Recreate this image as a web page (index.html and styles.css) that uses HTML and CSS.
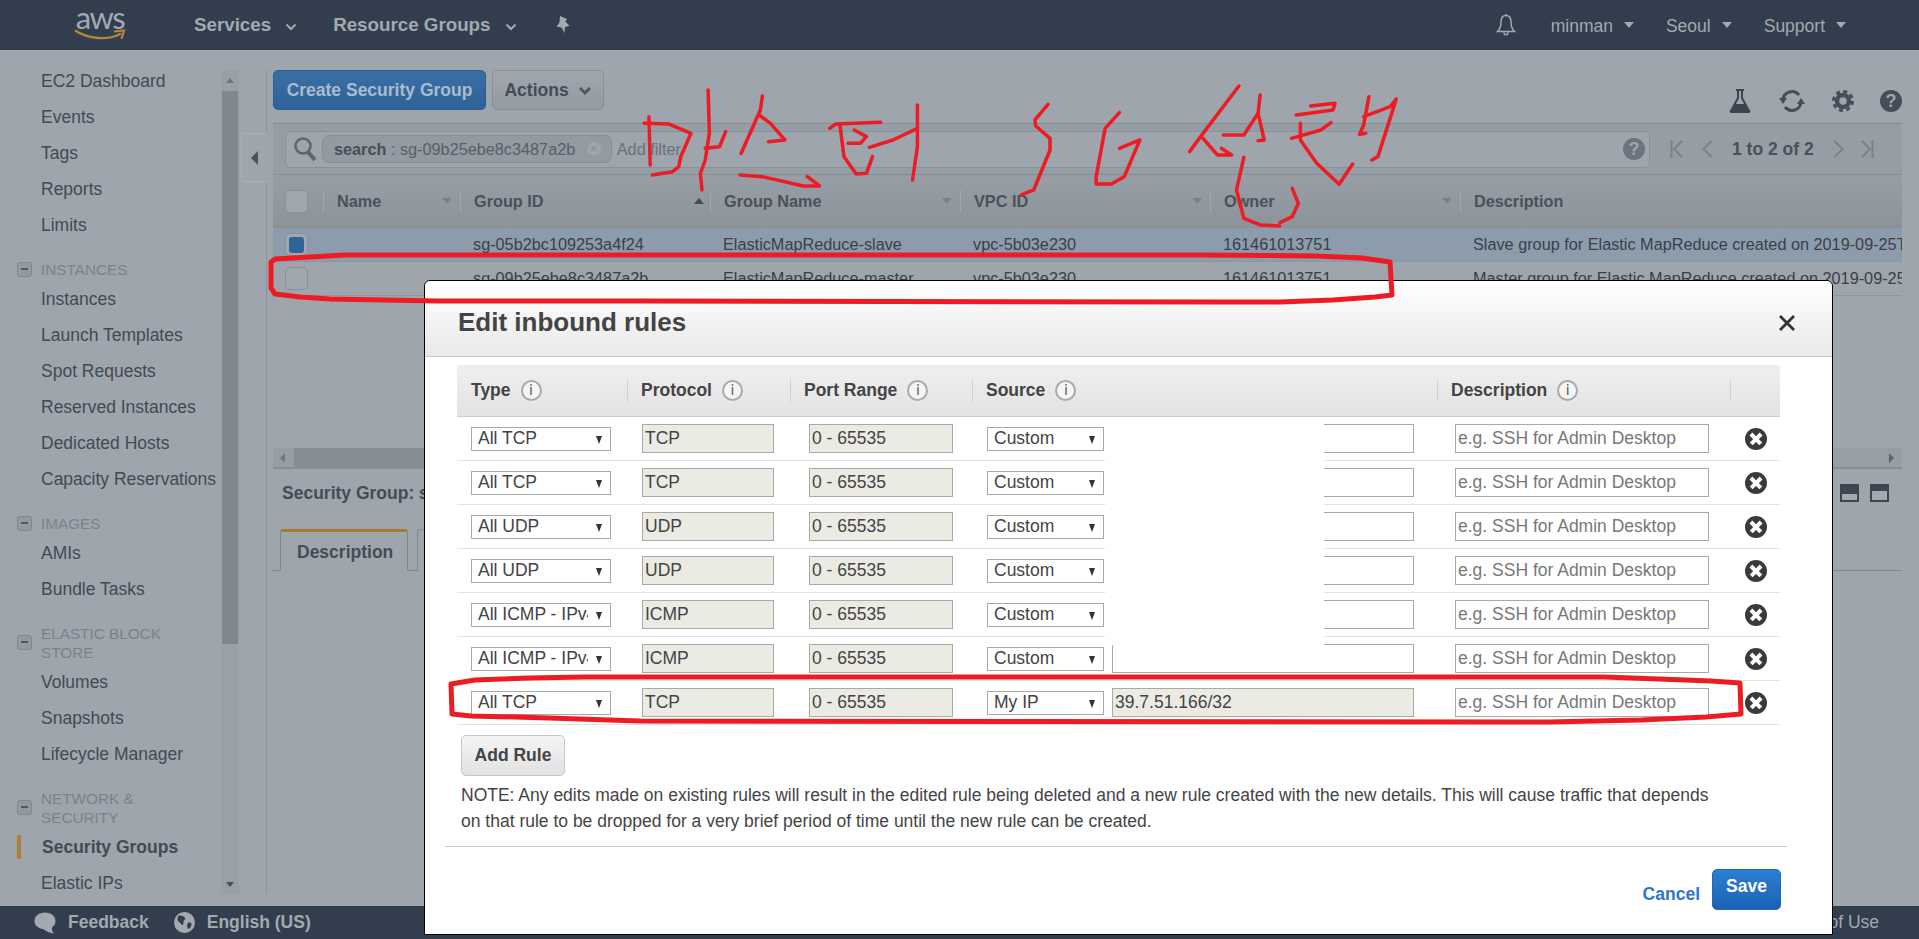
FILE: index.html
```html
<!DOCTYPE html>
<html lang="en">

<head>
    <meta charset="UTF-8">
    <title>Security Groups | EC2 Management Console</title>
    <link rel="stylesheet" href="styles.css">
</head>

<body>
    <!-- Top navigation -->
    <header class="topbar">
        <div class="logo">
            <span class="logo-text">aws</span>
            <svg class="logo-smile" width="52" height="12" viewBox="0 0 52 12">
                <path d="M1 1.500C14 10 34 12 47 4.500" fill="none" stroke="#b5853a" stroke-width="2.400" />
                <path d="M40 2.500L50 1.500L47.500 10" fill="none" stroke="#b5853a" stroke-width="2.200" />
            </svg>
        </div>
        <span class="nav-item nav-services">Services</span>
        <svg class="chev" width="12" height="8" viewBox="0 0 12 8"><path d="M1.500 1.500L6 6L10.500 1.500" fill="none" stroke="#a3a9b0" stroke-width="2" /></svg>
        <span class="nav-item nav-groups">Resource Groups</span>
        <svg class="chev" width="12" height="8" viewBox="0 0 12 8"><path d="M1.500 1.500L6 6L10.500 1.500" fill="none" stroke="#a3a9b0" stroke-width="2" /></svg>
        <svg class="pin" width="16" height="20" viewBox="0 0 16 20"><path d="M5 1L12 4L10.500 6.500L14.500 11L10 12L9.500 18L6.500 12.500L1.500 11.500L4.500 7.500z" fill="#a3a9b0" /></svg>
        <div class="top-right">
            <svg class="bell" width="20" height="24" viewBox="0 0 20 24"><path d="M10 2.500C6 2.500 5 6 5 9C5 13 4 16 1.500 18.500H18.500C16 16 15 13 15 9C15 6 14 2.500 10 2.500zM8 19.500C8 22.500 12 22.500 12 19.500M10 1V2.500" fill="none" stroke="#a3a9b0" stroke-width="1.500" /></svg>
            <span class="user-item">minman</span><i class="caret caret-top"></i>
            <span class="user-item">Seoul</span><i class="caret caret-top"></i>
            <span class="user-item">Support</span><i class="caret caret-top"></i>
        </div>
    </header>

    <div class="middle">
        <!-- Left menu -->
        <aside class="side">
            <nav class="side-nav">
                <a>EC2 Dashboard</a>
                <a>Events</a>
                <a>Tags</a>
                <a>Reports</a>
                <a>Limits</a>
                <h4><i class="minus"></i>INSTANCES</h4>
                <a>Instances</a>
                <a>Launch Templates</a>
                <a>Spot Requests</a>
                <a>Reserved Instances</a>
                <a>Dedicated Hosts</a>
                <a>Capacity Reservations</a>
                <h4><i class="minus"></i>IMAGES</h4>
                <a>AMIs</a>
                <a>Bundle Tasks</a>
                <h4><i class="minus"></i>ELASTIC BLOCK<br>STORE</h4>
                <a>Volumes</a>
                <a>Snapshots</a>
                <a>Lifecycle Manager</a>
                <h4><i class="minus"></i>NETWORK &amp;<br>SECURITY</h4>
                <a class="active">Security Groups</a>
                <a>Elastic IPs</a>
            </nav>
            <div class="side-scroll">
                <div class="scroll-up"></div>
                <div class="scroll-thumb"></div>
                <div class="scroll-down"></div>
            </div>
            <div class="side-edge">
                <div class="collapse-tab"></div>
            </div>
        </aside>

        <main class="main">
            <div class="actions">
                <button class="btn-create">Create Security Group</button>
                <button class="btn-actions">Actions
                    <svg width="14" height="10" viewBox="0 0 14 10"><path d="M2 2L7 7L12 2" fill="none" stroke="#505760" stroke-width="3" /></svg>
                </button>
                <div class="tools">
                    <svg width="24" height="26" viewBox="0 0 24 26">
                        <path d="M8 2H16M10 2V10L3 23H21L14 10V2" fill="none" stroke="#3c444e" stroke-width="2" />
                        <path d="M6 16H18L22 25H2z" fill="#3c444e" />
                    </svg>
                    <svg width="28" height="28" viewBox="0 0 28 28">
                        <path d="M5 13A9 9 0 0 1 21 8M23 15A9 9 0 0 1 7 20" fill="none" stroke="#454d57" stroke-width="3" />
                        <path d="M1 11H9L5 17zM27 17H19L23 11z" fill="#454d57" />
                    </svg>
                    <svg width="22" height="22" viewBox="0 0 22 22">
                        <circle cx="11" cy="11" r="9.500" fill="none" stroke="#454d57" stroke-width="3" stroke-dasharray="4 3.460" />
                        <circle cx="11" cy="11" r="6" fill="none" stroke="#454d57" stroke-width="4.500" />
                    </svg>
                    <span class="help">?</span>
                </div>
            </div>

            <section class="grid-wrap">
                <div class="filter-band">
                    <div class="search-box">
                        <svg width="24" height="26" viewBox="0 0 24 26">
                            <circle cx="10" cy="10" r="7.500" fill="none" stroke="#5d656e" stroke-width="2.500" />
                            <path d="M15 16L22 24" stroke="#5d656e" stroke-width="4" />
                        </svg>
                        <div class="token"><b>search</b> : sg-09b25ebe8c3487a2b <i class="token-x">×</i></div>
                        <span class="add-filter">Add filter</span>
                        <span class="help help-small">?</span>
                    </div>
                    <div class="pager">
                        <svg width="14" height="20" viewBox="0 0 14 20"><path d="M1.500 1V19M12 2L4 10L12 18" fill="none" stroke="#7a828a" stroke-width="2" /></svg>
                        <svg class="pager-prev" width="11" height="20" viewBox="0 0 11 20"><path d="M9.500 2L1.500 10L9.500 18" fill="none" stroke="#7a828a" stroke-width="2" /></svg>
                        <span class="pager-text">1 to 2 of 2</span>
                        <svg class="pager-next" width="11" height="20" viewBox="0 0 11 20"><path d="M1.500 2L9.500 10L1.500 18" fill="none" stroke="#7a828a" stroke-width="2" /></svg>
                        <svg class="pager-last" width="14" height="20" viewBox="0 0 14 20"><path d="M12.500 1V19M2 2L10 10L2 18" fill="none" stroke="#7a828a" stroke-width="2" /></svg>
                    </div>
                </div>

                <div class="grid-head">
                    <div class="th-check"><span class="check"></span></div>
                    <div class="th"><span>Name</span><i class="caret caret-sort"></i></div>
                    <div class="th"><span>Group ID</span><i class="caret caret-up"></i></div>
                    <div class="th"><span>Group Name</span><i class="caret caret-sort"></i></div>
                    <div class="th"><span>VPC ID</span><i class="caret caret-sort"></i></div>
                    <div class="th"><span>Owner</span><i class="caret caret-sort"></i></div>
                    <div class="th"><span>Description</span></div>
                </div>
                <div class="grid-row selected">
                    <div class="td-check"><span class="check"><i></i></span></div>
                    <div class="td"></div>
                    <div class="td">sg-05b2bc109253a4f24</div>
                    <div class="td">ElasticMapReduce-slave</div>
                    <div class="td">vpc-5b03e230</div>
                    <div class="td">161461013751</div>
                    <div class="td">Slave group for Elastic MapReduce created on 2019-09-25T00:00:00</div>
                </div>
                <div class="grid-row">
                    <div class="td-check"><span class="check"></span></div>
                    <div class="td"></div>
                    <div class="td">sg-09b25ebe8c3487a2b</div>
                    <div class="td">ElasticMapReduce-master</div>
                    <div class="td">vpc-5b03e230</div>
                    <div class="td">161461013751</div>
                    <div class="td">Master group for Elastic MapReduce created on 2019-09-25T00:00:00</div>
                </div>
                <div class="h-scroll">
                    <div class="h-left"></div>
                    <div class="h-thumb"></div>
                    <div class="h-right"></div>
                </div>
            </section>

            <div class="detail-bar">
                <b>Security Group: sg-05b2bc109253a4f24</b>
                <div class="split-icons">
                    <span class="split split-low"></span>
                    <span class="split"></span>
                </div>
            </div>
            <div class="tabs">
                <div class="tab active">Description</div>
                <div class="tab">Inbound</div>
            </div>
        </main>
    </div>

    <footer class="footer">
        <svg width="22" height="22" viewBox="0 0 22 22"><path d="M11 0.500C5 0.500 0.500 4 0.500 9C0.500 13 4 16.500 9 17C12 19 16 21.500 20 21.500C18.500 20 17.500 18 18 15.500C20.500 13.500 21.500 11.500 21.500 9C21.500 4 17 0.500 11 0.500z" fill="#a3a9b0" /></svg>
        <b class="foot-feedback">Feedback</b>
        <svg class="foot-globe" width="21" height="21" viewBox="0 0 21 21">
            <circle cx="10.500" cy="10.500" r="10.500" fill="#a3a9b0" />
            <path d="M4 4C7 3 10 4 11 6C12 8 9 8 9.500 10C10 13 8 14 7 12C6 10 3 9 3.500 7zM14 11C16 10 18 11 17.500 13C17 16 14 18 13.500 16C13 14 13 12 14 11z" fill="#323e4e" />
        </svg>
        <b class="foot-lang">English (US)</b>
        <span class="foot-terms">of Use</span>
    </footer>

    <!-- Edit inbound rules dialog -->
    <div class="modal">
        <div class="modal-head">
            <h2>Edit inbound rules</h2>
            <svg width="18" height="18" viewBox="0 0 18 18"><path d="M2 2L16 16M16 2L2 16" stroke="#333" stroke-width="2.800" /></svg>
        </div>
        <div class="modal-body">
            <div class="rules-head">
                <div class="rh"><span>Type</span><i class="info">i</i></div>
                <div class="rh"><span>Protocol</span><i class="info">i</i></div>
                <div class="rh"><span>Port Range</span><i class="info">i</i></div>
                <div class="rh"><span>Source</span><i class="info">i</i></div>
                <div class="rh"><span>Description</span><i class="info">i</i></div>
                <div class="rh"></div>
            </div>

            <div class="rule">
                <div class="select sel-type"><span>All TCP</span></div>
                <input class="in-proto" value="TCP" readonly>
                <input class="in-port" value="0 - 65535" readonly>
                <div class="source-cell"><div class="select sel-source"><span>Custom</span></div><input class="in-source"></div>
                <input class="in-desc" placeholder="e.g. SSH for Admin Desktop">
                <span class="remove"></span>
            </div>
            <div class="rule">
                <div class="select sel-type"><span>All TCP</span></div>
                <input class="in-proto" value="TCP" readonly>
                <input class="in-port" value="0 - 65535" readonly>
                <div class="source-cell"><div class="select sel-source"><span>Custom</span></div><input class="in-source"></div>
                <input class="in-desc" placeholder="e.g. SSH for Admin Desktop">
                <span class="remove"></span>
            </div>
            <div class="rule">
                <div class="select sel-type"><span>All UDP</span></div>
                <input class="in-proto" value="UDP" readonly>
                <input class="in-port" value="0 - 65535" readonly>
                <div class="source-cell"><div class="select sel-source"><span>Custom</span></div><input class="in-source"></div>
                <input class="in-desc" placeholder="e.g. SSH for Admin Desktop">
                <span class="remove"></span>
            </div>
            <div class="rule">
                <div class="select sel-type"><span>All UDP</span></div>
                <input class="in-proto" value="UDP" readonly>
                <input class="in-port" value="0 - 65535" readonly>
                <div class="source-cell"><div class="select sel-source"><span>Custom</span></div><input class="in-source"></div>
                <input class="in-desc" placeholder="e.g. SSH for Admin Desktop">
                <span class="remove"></span>
            </div>
            <div class="rule">
                <div class="select sel-type"><span>All ICMP - IPv4</span></div>
                <input class="in-proto" value="ICMP" readonly>
                <input class="in-port" value="0 - 65535" readonly>
                <div class="source-cell"><div class="select sel-source"><span>Custom</span></div><input class="in-source"></div>
                <input class="in-desc" placeholder="e.g. SSH for Admin Desktop">
                <span class="remove"></span>
            </div>
            <div class="rule">
                <div class="select sel-type"><span>All ICMP - IPv4</span></div>
                <input class="in-proto" value="ICMP" readonly>
                <input class="in-port" value="0 - 65535" readonly>
                <div class="source-cell"><div class="select sel-source"><span>Custom</span></div><input class="in-source"></div>
                <input class="in-desc" placeholder="e.g. SSH for Admin Desktop">
                <span class="remove"></span>
            </div>
            <div class="rule">
                <div class="select sel-type"><span>All TCP</span></div>
                <input class="in-proto" value="TCP" readonly>
                <input class="in-port" value="0 - 65535" readonly>
                <div class="source-cell"><div class="select sel-source"><span>My IP</span></div><input class="in-source in-ro" value="39.7.51.166/32" readonly></div>
                <input class="in-desc" placeholder="e.g. SSH for Admin Desktop">
                <span class="remove"></span>
            </div>

            <button class="btn-add">Add Rule</button>
            <p class="note">NOTE: Any edits made on existing rules will result in the edited rule being deleted and a new rule created with the new details. This will cause traffic that depends on that rule to be dropped for a very brief period of time until the new rule can be created.</p>
        </div>
        <div class="modal-foot">
            <a class="cancel">Cancel</a>
            <button class="btn-save">Save</button>
        </div>
        <!-- whited out addresses -->
        <div class="redact"></div>
    </div>

    <!-- Red pen marks drawn on top of the page -->
    <svg class="pen" width="1919" height="939" viewBox="0 0 1919 939">
        <path d="M271 262L275 259L310 257L345 255L640 255L1200 255L1317 256L1362 258L1390 262L1392 295L1375 297L1333 300L1280 302L1213 302L640 301L437 301L330 299L300 297L275 294L271 288Z" />
        <path d="M451 684L475 680L530 678L585 677L1604 677L1659 679L1711 681L1740 683L1741 714L1706 717L1641 720L1549 722L640 721L549 718L514 717L471 716L452 714Z" />
        <g transform="translate(640 0) scale(.408 .3333)">
            <path d="M10 370L70 372L125 400L100 470L95 500L80 515L30 525" />
            <path d="M22 350L25 495" />
            <path d="M167 270L170 400L160 480L148 520L152 570" />
            <path d="M160 445L195 440L210 395" />
            <path d="M300 288L295 330L248 460" />
            <path d="M292 345L320 370L355 420L315 425" />
            <path d="M245 525L300 530L400 558L440 558L410 530" />
            <path d="M465 385L480 372L590 367" />
            <path d="M490 375L500 470L530 522L555 520L570 470" />
            <path d="M525 390L555 410L540 430L510 430" />
            <path d="M680 315L680 440L668 540" />
            <path d="M562 442L620 420L680 385" />
            <path d="M1000 313L968 360L970 378L1005 415L1005 450L965 570L935 585" />
            <path d="M1175 338L1140 385L1118 530L1118 552L1155 552L1187 530L1225 420L1175 445" />
            <path d="M1468 258L1380 400L1347 455" />
            <path d="M1380 415L1415 465L1450 465L1425 445" />
            <path d="M1520 285L1515 340L1480 405L1430 405" />
            <path d="M1515 340L1530 420L1515 422" />
            <path d="M1480 472L1462 570L1480 655L1520 675L1568 678" />
        </g>
        <g transform="translate(1280 0) scale(.408 .3333)">
            <path d="M0 668L30 650L45 610L30 565" />
            <path d="M40 345L130 330L135 310L75 318" />
            <path d="M28 415L100 390L125 368" />
            <path d="M50 370L50 420L90 490L145 553L178 492" />
            <path d="M218 290L205 375L195 403L210 400" />
            <path d="M205 350L270 320L285 297L240 470L225 480" />
        </g>
    </svg>
</body>

</html>
```

FILE: styles.css
```css
* {
    box-sizing: border-box;
}

body {
    margin: 0;
    height: 939px;
    overflow: hidden;
    display: flex;
    flex-direction: column;
    background-color: #9ea5ac;
    color: #3f4650;
    font-family: "Liberation Sans", Arial, sans-serif;
    font-size: 17.5px;
}

/* Top bar */
.topbar {
    height: 50px;
    flex: none;
    display: flex;
    align-items: center;
    padding-left: 75px;
    background-color: #323e4e;
    color: #a3a9b0;
}

.logo {
    width: 50px;
    height: 50px;
    position: relative;
}

.logo-text {
    display: block;
    font-family: Lato, sans-serif;
    font-size: 31px;
    line-height: 34px;
    letter-spacing: -1.500px;
    text-align: center;
    color: #a3a9b0;
}

.logo-smile {
    position: absolute;
    left: -1px;
    top: 29px;
}

.nav-item {
    font-size: 18.750px;
    font-weight: bold;
}

.nav-services {
    margin-left: 69px;
}

.nav-groups {
    margin-left: 36px;
}

.chev {
    margin-left: 14px;
    margin-top: 4px;
}

.pin {
    margin-left: 38px;
}

.top-right {
    margin-left: auto;
    display: flex;
    align-items: center;
    padding-right: 73px;
}

.bell {
    margin-right: 35px;
}

.user-item {
    font-size: 17.5px;
    margin-top: 2px;
}

.caret {
    display: block;
    width: 0;
    height: 0;
    border-left: 5px solid transparent;
    border-right: 5px solid transparent;
    border-top: 6px solid #8a9199;
}

.caret-top {
    margin: 0 32px 0 11px;
    border-top-color: #a3a9b0;
}

.caret-top:last-child {
    margin-right: 0;
}

/* Left menu */
.middle {
    flex: 1;
    display: flex;
    min-height: 0;
}

.side {
    width: 267px;
    flex: none;
    display: flex;
}

.side-nav {
    width: 221px;
    flex: none;
    padding-top: 13px;
    overflow: hidden;
}

.side-nav a {
    display: block;
    height: 36px;
    line-height: 36px;
    padding-left: 41px;
    white-space: nowrap;
    color: #434a54;
}

.side-nav a.active {
    font-weight: bold;
    position: relative;
    padding-left: 42px;
}

.side-nav a.active::before {
    content: "";
    position: absolute;
    left: 17px;
    top: 6px;
    width: 4px;
    height: 24px;
    border-radius: 1px;
    background-color: #b07f36;
}

.side-nav h4 {
    margin: 17px 0 2px;
    padding-left: 41px;
    position: relative;
    font-size: 15.300px;
    font-weight: normal;
    line-height: 19px;
    color: #7a838c;
}

.minus {
    position: absolute;
    left: 17px;
    top: 50%;
    width: 15px;
    height: 15px;
    margin-top: -8px;
    border: 1px solid #80878f;
    border-radius: 3px;
    background-color: #939aa2;
}

.minus::after {
    content: "";
    position: absolute;
    left: 3px;
    top: 5px;
    width: 7px;
    height: 2px;
    background-color: #50575f;
}

.side-scroll {
    width: 18px;
    flex: none;
    margin-top: 20px;
    height: 824px;
    display: flex;
    flex-direction: column;
    background-color: #98a0a8;
}

.scroll-up {
    height: 21px;
    position: relative;
}

.scroll-up::after,
.scroll-down::after {
    content: "";
    position: absolute;
    left: 5px;
    top: 8px;
    border-left: 4px solid transparent;
    border-right: 4px solid transparent;
}

.scroll-up::after {
    border-bottom: 5px solid #6f7780;
}

.scroll-thumb {
    height: 553px;
    margin: 0 1px;
    background-color: #80878f;
}

.scroll-down {
    margin-top: auto;
    height: 21px;
    position: relative;
}

.scroll-down::after {
    top: 9px;
    border-top: 5px solid #4a5058;
}

.side-edge {
    flex: 1;
    margin-top: 20px;
    height: 824px;
    border-right: 1px solid #8b9299;
    position: relative;
}

.collapse-tab {
    position: absolute;
    left: 2px;
    right: -1px;
    top: 63px;
    height: 49px;
    border: 1px solid #a9afb6;
    border-right: 0;
    border-radius: 4px 0 0 4px;
    background-color: #9ea5ac;
}

.collapse-tab::after {
    content: "";
    position: absolute;
    left: 9px;
    top: 17px;
    border-top: 7px solid transparent;
    border-bottom: 7px solid transparent;
    border-right: 7px solid #4a5058;
}

/* Main content */
.main {
    flex: 1;
    min-width: 0;
    padding: 20px 17px 0 6px;
}

.actions {
    height: 40px;
    display: flex;
    align-items: stretch;
    margin-bottom: 13px;
}

.actions button {
    font-family: inherit;
    font-size: 17.5px;
    font-weight: bold;
    border-radius: 5px;
    padding: 0;
}

.btn-create {
    width: 213px;
    border: 1px solid #2c5c8e;
    background: linear-gradient(#3a6fa5, #2f6297);
    color: #a9bccf;
}

.btn-actions {
    width: 112px;
    margin-left: 6px;
    border: 1px solid #8a9199;
    background: linear-gradient(#a0a7ae, #939aa2);
    color: #454c56;
}

.btn-actions svg {
    margin-left: 4px;
}

.tools {
    margin-left: auto;
    display: flex;
    align-items: center;
    height: 61px;
    gap: 26px;
}

.help {
    display: block;
    width: 22px;
    height: 22px;
    border-radius: 50%;
    background-color: #454d57;
    color: #9ea5ac;
    font-size: 18px;
    font-weight: bold;
    line-height: 22px;
    text-align: center;
}

.grid-wrap {
    height: 346px;
    display: flex;
    flex-direction: column;
    overflow: hidden;
    border-bottom: 2px solid #878e96;
}

.filter-band {
    height: 52px;
    flex: none;
    display: flex;
    align-items: center;
    padding-left: 12px;
    background-color: #959da5;
    border-top: 1px solid #858c94;
    border-bottom: 1px solid #858c94;
}

.search-box {
    width: 1365px;
    height: 37px;
    display: flex;
    align-items: center;
    padding: 0 4px 0 7px;
    border: 1px solid #8a9299;
    border-radius: 5px;
    background-color: #9ea5ac;
}

.token {
    height: 28px;
    margin-left: 5px;
    padding: 0 10px 0 11px;
    display: flex;
    align-items: center;
    white-space: pre;
    font-size: 16.25px;
    border: 1px solid #878e96;
    border-radius: 7px;
    background-color: #939aa2;
    color: #585f68;
}

.token b {
    color: #474e58;
}

.token-x {
    width: 14px;
    height: 14px;
    margin-left: 7px;
    border-radius: 50%;
    background-color: #9fa6ad;
    color: #8a9199;
    font-style: normal;
    font-size: 13px;
    line-height: 13px;
    text-align: center;
}

.add-filter {
    margin-left: 5px;
    font-size: 16.25px;
    color: #68707a;
}

.help-small {
    margin-left: auto;
    background-color: #6c747d;
}

.pager {
    display: flex;
    align-items: center;
    margin-left: 20px;
}

.pager-prev {
    margin-left: 18px;
}

.pager-text {
    margin: 0 19px;
    font-weight: bold;
    color: #4a515b;
}

.pager-last {
    margin-left: 16px;
}

.grid-head,
.grid-row {
    display: grid;
    grid-template-columns: 50px 137px 250px 250px 250px 250px 442px;
    flex: none;
}

.grid-head {
    height: 53px;
    align-items: center;
    font-size: 16.25px;
    font-weight: bold;
    color: #4a515b;
    background: linear-gradient(#979ea6, #8c9399);
    border-bottom: 1px solid #878e96;
}

.th-check,
.td-check {
    padding-left: 12px;
    display: flex;
    align-items: center;
}

.th {
    height: 23px;
    display: flex;
    align-items: center;
    justify-content: space-between;
    padding: 0 8px 0 13px;
    border-left: 1px solid #a1a8af;
}

.caret-sort {
    border-top-color: #7a828a;
}

.caret-up {
    border-top: 0;
    border-bottom: 6px solid #454c56;
    margin-right: -2px;
}

.check {
    display: flex;
    align-items: center;
    justify-content: center;
    width: 23px;
    height: 23px;
    border: 1px solid #8a9199;
    border-radius: 5px;
    background-color: #a0a7ae;
}

.check i {
    width: 15px;
    height: 16px;
    border-radius: 3px;
    background-color: #2f6499;
}

.grid-row {
    height: 34px;
    align-items: center;
    font-size: 16.25px;
    color: #3a4048;
    white-space: nowrap;
    border-bottom: 1px solid #8e959c;
}

.grid-row.selected {
    background-color: #8d9cac;
}

.grid-row .td {
    padding-left: 13px;
    overflow: hidden;
}

.h-scroll {
    margin-top: auto;
    height: 19px;
    flex: none;
    display: flex;
    background-color: #979ea6;
}

.h-left,
.h-right {
    width: 21px;
    position: relative;
}

.h-left::after,
.h-right::after {
    content: "";
    position: absolute;
    top: 5px;
    border-top: 5px solid transparent;
    border-bottom: 5px solid transparent;
}

.h-left::after {
    left: 7px;
    border-right: 5px solid #6f7780;
}

.h-right::after {
    left: 8px;
    border-left: 5px solid #5c646d;
}

.h-thumb {
    flex: 1;
    margin-right: 60px;
    background-color: #868d95;
}

.detail-bar {
    height: 48px;
    display: flex;
    align-items: center;
    padding: 1px 0 0 9px;
    white-space: nowrap;
    color: #454c56;
}

.split-icons {
    margin-left: auto;
    display: flex;
    gap: 11px;
    margin-right: 13px;
    margin-top: -1px;
}

.split {
    display: block;
    width: 19px;
    height: 18px;
    padding: 7px 2px 2px;
    background-color: #3f4650;
}

.split::after {
    content: "";
    display: block;
    height: 100%;
    background-color: #a3a9b0;
}

.split-low {
    padding-top: 10px;
}

.tabs {
    height: 42px;
    margin-top: 12px;
    display: flex;
    padding-left: 7px;
    border-bottom: 1px solid #80878f;
}

.tab {
    width: 128px;
    height: 42px;
    margin-right: 9px;
    padding-top: 10px;
    padding-left: 16px;
    font-weight: bold;
    color: #454c56;
    border: 1px solid #80878f;
    border-top: 3px solid #a87a30;
    border-radius: 3px 3px 0 0;
    border-bottom: 0;
    background-color: #9ea5ac;
}

.tab + .tab {
    border-top-color: #80878f;
    border-top-width: 1px;
    color: #6c747d;
}

/* Bottom bar */
.footer {
    height: 33px;
    flex: none;
    display: flex;
    align-items: center;
    padding-left: 34px;
    background-color: #323e4e;
    color: #a3a9b0;
    white-space: nowrap;
}

.foot-feedback {
    margin-left: 12px;
}

.foot-globe {
    margin-left: 25px;
}

.foot-lang {
    margin-left: 12px;
}

.foot-terms {
    margin-left: auto;
    padding-right: 40px;
}

/* Dialog */
.modal {
    position: absolute;
    left: 424px;
    top: 280px;
    width: 1409px;
    height: 655px;
    background-color: #fff;
    border: 1px solid #000;
    border-radius: 6px 6px 0 0;
    color: #333;
}

.modal-head {
    height: 76px;
    display: flex;
    align-items: center;
    justify-content: space-between;
    padding: 7px 36px 0 33px;
    background: linear-gradient(#fff, #e9e9e9);
    border-bottom: 1px solid #ccc;
    border-radius: 6px 6px 0 0;
}

.modal-head h2 {
    margin: 0;
    font-size: 26px;
    color: #444;
}

.modal-head svg {
    margin-top: 2px;
}

.modal-body {
    padding: 8px 52px 0 32px;
}

.rules-head,
.rule {
    display: grid;
    grid-template-columns: 170px 163px 182px 465px 293px 50px;
    align-items: center;
}

.rules-head {
    height: 52px;
    background: linear-gradient(#efefef, #e3e3e3);
    border-bottom: 1px solid #ccc;
}

.rh {
    height: 23px;
    display: flex;
    align-items: center;
    gap: 10px;
    padding-left: 13px;
    border-left: 1px solid #d2d2d2;
    font-weight: bold;
    color: #444;
}

.rh:first-child {
    border-left: 0;
    padding-left: 14px;
}

.info {
    width: 21px;
    height: 21px;
    border: 2px solid #aaa;
    border-radius: 50%;
    background-color: #f5f5f5;
    color: #555;
    font-family: "DejaVu Sans", sans-serif;
    font-size: 14px;
    font-style: normal;
    font-weight: normal;
    line-height: 17px;
    text-align: center;
}

.rule {
    height: 44px;
    border-bottom: 1px solid #e2e2e2;
}

.rule input {
    height: 29px;
    padding: 0 2px;
    font-family: inherit;
    font-size: 17.5px;
    color: #444;
    border: 1px solid #a9a9a9;
    border-radius: 0;
    background-color: #fff;
    outline: none;
}

.rule input::placeholder {
    color: #777;
    opacity: 1;
}

.rule .in-proto,
.rule .in-port,
.rule .in-ro {
    background-color: #ebebe4;
}

.in-proto {
    width: 132px;
    margin-left: 15px;
}

.in-port {
    width: 144px;
    margin-left: 19px;
}

.in-source {
    width: 302px;
}

.in-desc {
    width: 254px;
    margin-left: 18px;
}

.select {
    height: 24px;
    display: flex;
    align-items: center;
    padding-left: 6px;
    border: 1px solid #a9a9a9;
    background-color: #fff;
    color: #444;
    position: relative;
    overflow: hidden;
    white-space: nowrap;
}

.select::after {
    content: "";
    position: absolute;
    right: 8px;
    top: 8px;
    border-left: 3.500px solid transparent;
    border-right: 3.500px solid transparent;
    border-top: 8px solid #333;
}

.select span {
    overflow: hidden;
}

.sel-type {
    width: 140px;
    margin-left: 14px;
}

.sel-type span {
    width: 110px;
}

.sel-source {
    width: 117px;
    flex: none;
}

.source-cell {
    display: flex;
    align-items: center;
    gap: 8px;
    margin-left: 15px;
}

.remove {
    width: 22px;
    height: 22px;
    margin-left: 15px;
    border-radius: 50%;
    background-color: #3a3a3a;
    position: relative;
}

.remove::before,
.remove::after {
    content: "";
    position: absolute;
    left: 4px;
    top: 9.250px;
    width: 14px;
    height: 3.500px;
    background-color: #fff;
    transform: rotate(45deg);
}

.remove::after {
    transform: rotate(-45deg);
}

.btn-add {
    display: block;
    width: 104px;
    height: 41px;
    margin: 10px 0 6px 4px;
    padding: 0;
    font-family: inherit;
    font-size: 17.5px;
    font-weight: bold;
    color: #444;
    border: 1px solid #c6c6c6;
    border-radius: 5px;
    background: linear-gradient(#f4f4f4, #e2e2e2);
}

.note {
    margin: 0 0 0 4px;
    width: 1270px;
    line-height: 26px;
    color: #444;
}

.modal-foot {
    margin: 12px 45px 0 20px;
    padding: 22px 6px 0 0;
    display: flex;
    justify-content: flex-end;
    align-items: flex-start;
    border-top: 1px solid #ccc;
}

.cancel {
    margin-top: 15px;
    margin-right: 12px;
    font-weight: bold;
    color: #2f75cc;
}

.btn-save {
    width: 69px;
    height: 41px;
    padding: 0 0 7px;
    font-family: inherit;
    font-size: 17.5px;
    font-weight: bold;
    color: #fff;
    border: 1px solid #1f68b8;
    border-radius: 5px;
    background: linear-gradient(#2d7fd3, #1a62b2);
}

.redact {
    position: absolute;
    left: 680px;
    top: 136px;
    width: 219px;
    height: 228px;
    background-color: #fff;
}

/* Pen marks */
.pen {
    position: absolute;
    left: 0;
    top: 0;
    pointer-events: none;
}

.pen path {
    fill: none;
    stroke: #ed1c24;
    stroke-width: 3.500;
    stroke-linejoin: round;
    stroke-linecap: round;
    vector-effect: non-scaling-stroke;
}

.pen > path {
    stroke-width: 5;
}
```
